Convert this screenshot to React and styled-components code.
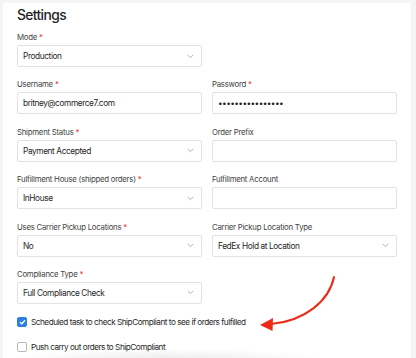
import React from 'react'
import styled, { createGlobalStyle } from 'styled-components'

const GlobalStyle = createGlobalStyle`
  html, body {
    margin: 0;
    padding: 0;
    background: #f4f5f6;
    font-family: Inter, 'Noto Sans', sans-serif;
    color: #222;
  }
`

const Page = styled.div`
  width: 416px;
  height: 358px;
  overflow: hidden;
  padding: 3px 5px 0 3px;
  box-sizing: border-box;
  position: relative;
`

const Panel = styled.section`
  background: #fff;
  height: 100%;
  padding: 1px 0 0 14px;
  box-sizing: border-box;
  position: relative;
`

const Title = styled.h1`
  margin: 0 0 5px;
  font-size: 13.8px;
  line-height: 22px;
  font-weight: 500;
  letter-spacing: -0.6px;
  color: #1f1f1f;
`

const Grid = styled.div`
  display: grid;
  grid-template-columns: 185px 185px;
  column-gap: 10px;
  row-gap: 11.4px;
`

const Field = styled.div`
  display: flex;
  flex-direction: column;
  gap: 1px;
`

const Label = styled.label`
  font-size: 7.8px;
  line-height: 13px;
  letter-spacing: -0.25px;
  color: #444;
`

const Req = styled.span`
  color: #e5312b;
  margin-left: 2px;
`

const Box = styled.div`
  height: 22px;
  border: 1px solid #e2e2e2;
  border-radius: 2px;
  box-sizing: border-box;
  display: flex;
  align-items: center;
  justify-content: space-between;
  padding: 0 7px 0 5px;
  font-size: 8.3px;
  letter-spacing: ${(p) => (p.$secret ? '-0.6px' : '-0.4px')};
  color: #1f1f1f;
`

const Chevron = () => (
  <svg width="7" height="5" viewBox="0 0 7 5" fill="none">
    <path d="M0.8 1 L3.5 3.6 L6.2 1" stroke="#a6a6a6" strokeWidth="0.9" />
  </svg>
)

const Checks = styled.div`
  margin-top: 12px;
  display: flex;
  flex-direction: column;
  gap: 13px;
`

const CheckRow = styled.div`
  display: flex;
  align-items: center;
  gap: 4px;
  height: 12px;
  font-size: 8.2px;
  letter-spacing: -0.48px;
  color: #2a2a2a;
`

const CheckBox = styled.span`
  width: 10px;
  height: 10px;
  border-radius: 2px;
  box-sizing: border-box;
  display: inline-flex;
  align-items: center;
  justify-content: center;
  flex-shrink: 0;
  background: ${(p) => (p.$on ? '#2f7fe0' : '#fff')};
  border: 1px solid ${(p) => (p.$on ? '#2f7fe0' : '#b9b9b9')};
`

const Arrow = styled.svg`
  position: absolute;
  left: 250px;
  top: 268px;
  overflow: visible;
`

const Fade = styled.div`
  position: absolute;
  left: -3px;
  right: 80px;
  bottom: 0;
  height: 10px;
  background: radial-gradient(ellipse at 50% 140%, rgba(0, 0, 0, 0.09), rgba(0, 0, 0, 0) 70%);
`

const fields = [
  { label: 'Mode', req: true, value: 'Production', select: true, full: true },
  { label: 'Username', req: true, value: 'britney@commerce7.com' },
  { label: 'Password', req: true, value: '••••••••••••••••', secret: true },
  { label: 'Shipment Status', req: true, value: 'Payment Accepted', select: true },
  { label: 'Order Prefix', value: '' },
  { label: 'Fulfillment House (shipped orders)', req: true, value: 'InHouse', select: true },
  { label: 'Fulfillment Account', value: '' },
  { label: 'Uses Carrier Pickup Locations', req: true, value: 'No', select: true },
  { label: 'Carrier Pickup Location Type', value: 'FedEx Hold at Location', select: true },
  { label: 'Compliance Type', req: true, value: 'Full Compliance Check', select: true, full: true },
]

export default function App() {
  return (
    <Page>
      <GlobalStyle />
      <Panel>
        <Title>Settings</Title>
        <Grid>
          {fields.map((f) => (
            <React.Fragment key={f.label}>
              <Field>
                <Label>
                  {f.label}
                  {f.req && <Req>*</Req>}
                </Label>
                <Box $secret={f.secret}>
                  <span>{f.value}</span>
                  {f.select && <Chevron />}
                </Box>
              </Field>
              {f.full && <div />}
            </React.Fragment>
          ))}
        </Grid>
        <Checks>
          <CheckRow>
            <CheckBox $on>
              <svg width="7" height="6" viewBox="0 0 7 6">
                <path d="M1 3.2 L2.8 4.8 L6 1.2" stroke="#fff" strokeWidth="1.3" fill="none" />
              </svg>
            </CheckBox>
            Scheduled task to check ShipCompliant to see if orders fulfilled
          </CheckRow>
          <CheckRow>
            <CheckBox />
            Push carry out orders to ShipCompliant
          </CheckRow>
        </Checks>
        <Arrow width="90" height="60" viewBox="0 0 90 60">
          <path d="M81 6 C 76 30, 52 50, 18 53" stroke="#ec2a1a" strokeWidth="2" fill="none" strokeLinecap="round" />
          <path d="M7 54 L20 47 L19.5 60 Z" fill="#ec2a1a" />
        </Arrow>
      </Panel>
      <Fade />
    </Page>
  )
}
